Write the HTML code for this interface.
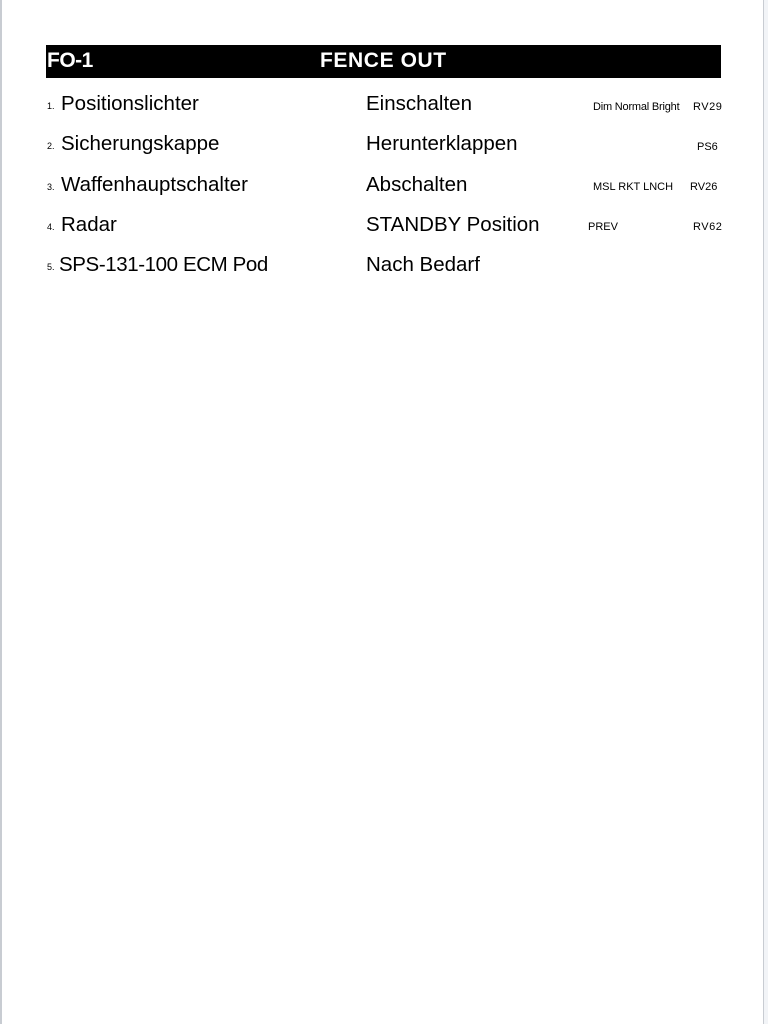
<!DOCTYPE html>
<html><head><meta charset="utf-8"><style>
body{margin:0;width:768px;height:1024px;background:#fff;position:relative;overflow:hidden;font-family:"Liberation Sans",Arial,sans-serif;color:#000}
.bl{position:absolute;left:0;top:0;width:2px;height:1024px;background:#c8ccd2}
.br{position:absolute;left:763px;top:0;width:5px;height:1024px;background:#f2f4f7;border-left:1px solid #c8ccd2}
.bar{position:absolute;left:46px;top:45px;width:675px;height:33px;background:#000}
.t{position:absolute;white-space:nowrap;line-height:1}
.h{color:#fff;font-weight:bold;font-size:21px;top:50px;letter-spacing:0.6px}
.m{font-size:20.5px}
.n{font-size:9px}
.s{font-size:11px}
</style></head><body>
<div class="bl"></div><div class="br"></div>
<div class="bar"></div>
<div class="t h" style="left:47px;letter-spacing:-0.5px">FO-1</div>
<div class="t h" style="left:320px">FENCE OUT</div>

<div class="t n" style="left:47px;top:102px">1.</div>
<div class="t m" style="left:61px;top:94px">Positionslichter</div>
<div class="t m" style="left:366px;top:94px">Einschalten</div>
<div class="t s" style="left:593px;top:102px;letter-spacing:-0.2px">Dim Normal Bright</div>
<div class="t s" style="left:693px;top:102px;letter-spacing:0.5px">RV29</div>

<div class="t n" style="left:47px;top:142px">2.</div>
<div class="t m" style="left:61px;top:134px">Sicherungskappe</div>
<div class="t m" style="left:366px;top:134px">Herunterklappen</div>
<div class="t s" style="left:697px;top:142px">PS6</div>

<div class="t n" style="left:47px;top:183px">3.</div>
<div class="t m" style="left:61px;top:175px">Waffenhauptschalter</div>
<div class="t m" style="left:366px;top:175px">Abschalten</div>
<div class="t s" style="left:593px;top:182px">MSL RKT LNCH</div>
<div class="t s" style="left:690px;top:182px">RV26</div>

<div class="t n" style="left:47px;top:223px">4.</div>
<div class="t m" style="left:61px;top:215px">Radar</div>
<div class="t m" style="left:366px;top:215px">STANDBY Position</div>
<div class="t s" style="left:588px;top:222px">PREV</div>
<div class="t s" style="left:693px;top:222px;letter-spacing:0.5px">RV62</div>

<div class="t n" style="left:47px;top:263px">5.</div>
<div class="t m" style="left:59px;top:255px;letter-spacing:-0.4px">SPS-131-100 ECM Pod</div>
<div class="t m" style="left:366px;top:255px">Nach Bedarf</div>
</body></html>
